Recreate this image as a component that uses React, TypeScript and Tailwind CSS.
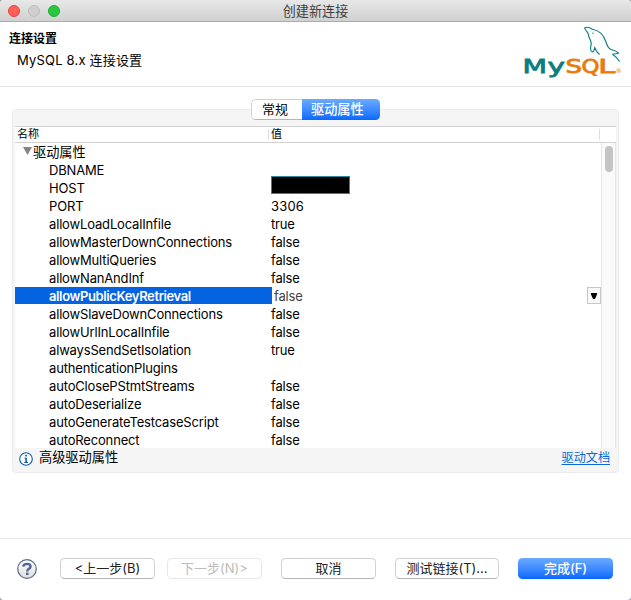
const rows: { name: string; value: string; masked?: boolean; selected?: boolean }[] = [
  { name: 'DBNAME', value: '' },
  { name: 'HOST', value: '', masked: true },
  { name: 'PORT', value: '3306' },
  { name: 'allowLoadLocalInfile', value: 'true' },
  { name: 'allowMasterDownConnections', value: 'false' },
  { name: 'allowMultiQueries', value: 'false' },
  { name: 'allowNanAndInf', value: 'false' },
  { name: 'allowPublicKeyRetrieval', value: 'false', selected: true },
  { name: 'allowSlaveDownConnections', value: 'false' },
  { name: 'allowUrlInLocalInfile', value: 'false' },
  { name: 'alwaysSendSetIsolation', value: 'true' },
  { name: 'authenticationPlugins', value: '' },
  { name: 'autoClosePStmtStreams', value: 'false' },
  { name: 'autoDeserialize', value: 'false' },
  { name: 'autoGenerateTestcaseScript', value: 'false' },
  { name: 'autoReconnect', value: 'false' },
];

function MySqlLogo() {
  return (
    <svg width="106" height="60" viewBox="520 22 106 60" className="shrink-0">
      <g fill="none" stroke="#0b7f80" strokeWidth="1.15" strokeLinejoin="round" strokeLinecap="round">
        <path d="M584.8 28C586.5 26.8 589.5 27.3 592.5 29.2C599.5 30.3 604 36 606 42C607 45.5 608 48.3 611 49.5Q616.5 51 618.5 53.2Q615.5 53.8 612.6 54.3Q616.5 57 619.3 61.3" />
        <path d="M584.8 28C585.2 30.5 587.7 31.6 588.3 34.2C588.6 38 591.3 40.8 591.2 43.5C591.3 46 589.7 47.8 590.8 50.3Q592 52.6 593.5 51.4Q594.5 49.5 594.7 47.3Q596.2 52 599.3 54.2" />
      </g>
      <circle cx="593" cy="33.3" r="0.7" fill="#0b7f80" />
      <g fontFamily="'DejaVu Sans', sans-serif" fontSize="19.5" strokeWidth="0.8">
        <text x="522.5" y="73" fill="#0b7f80" stroke="#0b7f80" textLength="24.5" lengthAdjust="spacingAndGlyphs">M</text>
        <text x="547.5" y="73" fill="#0b7f80" stroke="#0b7f80" textLength="17.5" lengthAdjust="spacingAndGlyphs">y</text>
        <text x="565.6" y="73" fill="#e97b0c" stroke="#e97b0c" textLength="16.5" lengthAdjust="spacingAndGlyphs">S</text>
        <text x="581.6" y="73" fill="#e97b0c" stroke="#e97b0c" textLength="18" lengthAdjust="spacingAndGlyphs">Q</text>
        <text x="598.3" y="73" fill="#e97b0c" stroke="#e97b0c" textLength="17" lengthAdjust="spacingAndGlyphs">L</text>
        <text x="615.5" y="73" fill="#e97b0c" fontSize="6.5">®</text>
      </g>
    </svg>
  );
}

const button =
  'flex h-[21px] shrink-0 items-center justify-center rounded-[4.5px] border bg-white text-[13px] leading-none pb-px';
const enabled = 'border-[#d2d2d2] border-b-[#b5b5b5]';

export default function App() {
  return (
    <div className="bg-[#a5a3b3]">
      <div className="flex h-[600px] w-[631px] flex-col overflow-hidden rounded-[4px] bg-white font-[Inter,'Noto_Sans_CJK_SC',sans-serif] text-[13px] text-black">
        <header className="grid h-[22px] shrink-0 grid-cols-[1fr_auto_1fr] items-center border-b border-[#acacac] bg-linear-to-b from-[#e8e8e8] to-[#d0d0d0]">
          <div className="flex gap-2 pl-2">
            <span className="size-3 rounded-full border border-[#e2463f] bg-[#ff5f57]" />
            <span className="size-3 rounded-full border border-[#bdbdbd] bg-[#cfcfcf]" />
            <span className="size-3 rounded-full border border-[#1dad2b] bg-[#28c940]" />
          </div>
          <h1 className="pt-px text-[13.1px] leading-5 text-[#404040]">创建新连接</h1>
          <div />
        </header>

        <section className="flex h-[65px] shrink-0 justify-between border-b border-[#e5e5e5] pr-[5px] pl-[9px]">
          <div className="pt-[8px]">
            <h2 className="text-[12px] leading-[18px] font-bold">连接设置</h2>
            <p className="pt-[2px] pl-[8px] text-[13px] leading-[20px] tracking-[0.19px]">MySQL 8.x 连接设置</p>
          </div>
          <MySqlLogo />
        </section>

        <main className="flex h-[451px] shrink-0 flex-col px-3 pt-[22px]">
          <div className="relative flex h-[364px] flex-col rounded-[4px] border border-[#ececec] bg-[#f5f5f5] px-[2px]">
            <div className="absolute top-[-11px] left-[238px] flex h-[21px] w-[129px] overflow-hidden rounded-[4.5px] leading-none">
              <div className="flex w-[51px] items-center rounded-l-[4.5px] border border-r-0 border-[#d2d2d2] border-b-[#b5b5b5] bg-white pl-[10px]">常规</div>
              <div className="flex flex-1 items-center bg-linear-to-b from-[#6aabff] to-[#0568fe] pl-[9px] text-[13.2px] font-medium text-white">驱动属性</div>
            </div>

            <div className="mt-4 flex h-[17px] shrink-0 items-center border-y border-[#d2d2d2] bg-white text-[11px] leading-none">
              <span className="w-[253px] pl-[2px]">名称</span>
              <span className="flex h-[11px] w-[332px] items-center border-x border-[#dedede] pl-[2px]">值</span>
            </div>

            <div className="flex h-[305px] shrink-0 overflow-hidden bg-white">
              <div className="w-[586px]">
                <div className="flex h-[18px] items-center pl-[8px]">
                  <svg width="10" height="8" className="mb-[2px]"><path d="M0 0H9L4.5 8Z" fill="#858585" /></svg>
                  <span className="text-[13.2px] leading-[18px]">驱动属性</span>
                </div>
                {rows.map((r) => (
                  <div key={r.name} className="flex h-[18px] leading-[18px]">
                    <div
                      className={
                        r.selected
                          ? 'h-[17px] w-[257px] bg-[#0463e1] pl-[34px] font-semibold tracking-[-0.38px] text-white'
                          : 'w-[256px] pl-[34px] tracking-[-0.16px]'
                      }
                    >
                      {r.name}
                    </div>
                    {r.masked ? (
                      <div className="-mt-[3px] h-[18px] w-[79px] border border-[#1f8ba0] bg-black" />
                    ) : r.selected ? (
                      <div className="flex flex-1 items-start justify-between pl-[2px] tracking-[-0.16px] text-[#444]">
                        <span>{r.value}</span>
                        <span className="flex h-[17px] w-[14px] items-center justify-center border border-[#c6c6c6] bg-[#f8f8f8]">
                          <svg width="6" height="6"><path d="M0 0H6V1.5L4 6H2L0 1.5Z" fill="#000" /></svg>
                        </span>
                      </div>
                    ) : (
                      <div className={r.value === '3306' ? 'tracking-[0.2px]' : 'tracking-[-0.16px]'}>{r.value}</div>
                    )}
                  </div>
                ))}
              </div>
              <div className="flex w-[15px] justify-center border-x border-[#e6e6e6] bg-[#fafafa] pt-[3px]">
                <div className="h-[26px] w-2 rounded-full bg-[#c4c4c4]" />
              </div>
            </div>

            <div className="flex h-[20px] items-center pr-[6px] pl-[4px]">
              <svg width="14" height="14" viewBox="0 0 14 14" className="mt-[2px]">
                <circle cx="7" cy="7" r="6.3" fill="#fff" stroke="#0a5ca8" strokeWidth="1.1" />
                <path d="M6.2 2.8H7.9V4.5H6.2ZM5.2 5.7H7.9V10H9V11H5.2V10H6.3V6.6H5.2Z" fill="#0a5ca8" />
              </svg>
              <span className="pl-[6px] text-[13.2px] leading-none">高级驱动属性</span>
              <a className="ml-auto text-[12.1px] leading-none text-[#0a68da] underline decoration-1 underline-offset-[2px]">驱动文档</a>
            </div>
          </div>
        </main>

        <footer className="flex h-[62px] items-start border-t border-[#e5e5e5] pt-[19px] pl-[17px] text-[#222]">
          <svg width="20" height="20" viewBox="0 0 20 20" className="mt-px mr-[23px] shrink-0">
            <defs>
              <linearGradient id="help" x2="0" y2="1"><stop stopColor="#fff" /><stop offset="1" stopColor="#dedede" /></linearGradient>
            </defs>
            <circle cx="10" cy="10" r="9.3" fill="url(#help)" stroke="#5a6b8a" strokeWidth="1.2" />
            <path d="M6.2 7.6Q6.6 4.9 10 4.9Q13.6 5 13.6 7.4Q13.5 9 11.5 10Q10.2 10.7 10.2 12.4" fill="none" stroke="#52668f" strokeWidth="2.4" />
            <rect x="9" y="13.6" width="2.5" height="2.4" fill="#52668f" />
          </svg>
          <button className={`${button} ${enabled} w-[95px]`}>&lt;上一步(B)</button>
          <button className={`${button} ml-3 w-[95px] border-[#e6e6e6] text-[#bcbcbc]`}>下一步(N)&gt;</button>
          <button className={`${button} ${enabled} ml-[19px] w-[95px]`}>取消</button>
          <button className={`${button} ${enabled} ml-[19px] w-[104px]`}>测试链接(T)...</button>
          <button className="ml-[19px] flex h-[21px] w-[95px] items-center justify-center rounded-[4.5px] bg-linear-to-b from-[#6aabff] to-[#0568fe] pb-px text-[13px] leading-none font-medium text-white">完成(F)</button>
        </footer>
      </div>
    </div>
  );
}
